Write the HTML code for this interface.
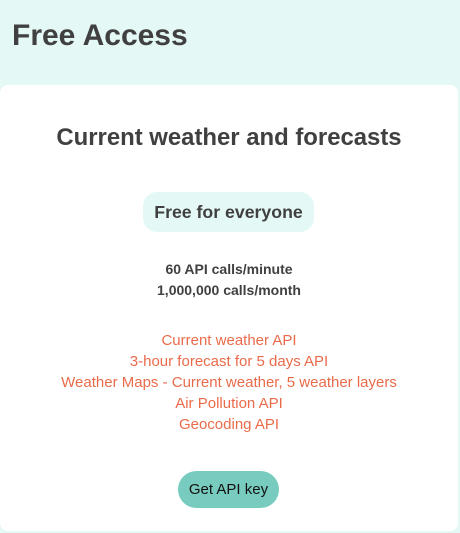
<!DOCTYPE html>
<html><head><style>
body{margin:0;width:460px;height:533px;background:#e4f8f6;font-family:"Liberation Sans",Arial,sans-serif;overflow:hidden;position:relative}
h1{position:absolute;left:12px;top:19px;margin:0;font-size:30px;font-weight:bold;color:#404040}
.card{position:absolute;left:0;top:85px;width:458px;height:446px;background:#fff;border-radius:8px;text-align:center;color:#404040}
h2{position:absolute;top:39px;left:0;right:0;margin:0;font-size:23.9px;font-weight:bold}
.pill{position:absolute;top:107px;left:143px;width:171px;height:40px;background:#e4f8f6;border-radius:14px;font-size:17.7px;font-weight:bold;line-height:40px}
.calls{position:absolute;top:174px;left:0;right:0;font-size:14px;font-weight:bold;line-height:21px}
.list{position:absolute;top:245px;left:0;right:0;font-size:15px;color:#ea6b4a;line-height:21px}
.btn{position:absolute;top:386px;left:178px;width:101px;height:37px;background:#78cbbf;border-radius:19px;font-size:15px;line-height:37px;color:#111}
</style></head><body>
<h1>Free Access</h1>
<div class="card">
<h2>Current weather and forecasts</h2>
<div class="pill">Free for everyone</div>
<div class="calls">60 API calls/minute<br>1,000,000 calls/month</div>
<div class="list">Current weather API<br>3-hour forecast for 5 days API<br>Weather Maps - Current weather, 5 weather layers<br>Air Pollution API<br>Geocoding API</div>
<div class="btn">Get API key</div>
</div>
</body></html>
